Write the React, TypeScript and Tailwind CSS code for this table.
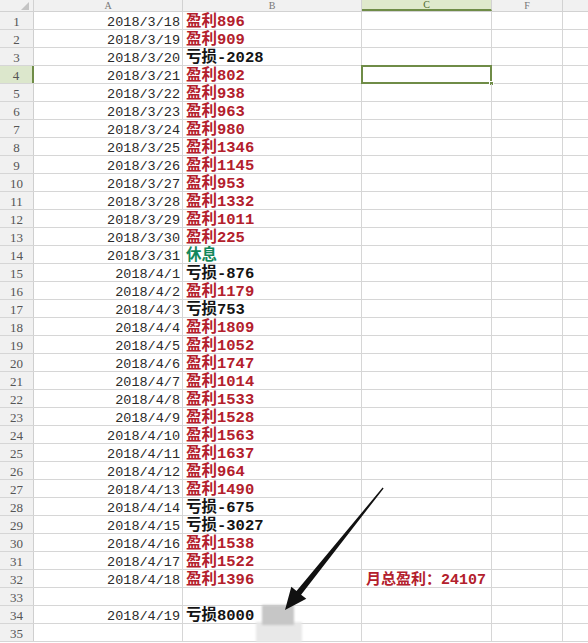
import React from 'react';

type Row = { date?: string; text?: string; tone?: 'red' | 'black' | 'green'; note?: string };

const rows: Row[] = [
  { date: '2018/3/18', text: '盈利896', tone: 'red' },
  { date: '2018/3/19', text: '盈利909', tone: 'red' },
  { date: '2018/3/20', text: '亏损-2028', tone: 'black' },
  { date: '2018/3/21', text: '盈利802', tone: 'red' },
  { date: '2018/3/22', text: '盈利938', tone: 'red' },
  { date: '2018/3/23', text: '盈利963', tone: 'red' },
  { date: '2018/3/24', text: '盈利980', tone: 'red' },
  { date: '2018/3/25', text: '盈利1346', tone: 'red' },
  { date: '2018/3/26', text: '盈利1145', tone: 'red' },
  { date: '2018/3/27', text: '盈利953', tone: 'red' },
  { date: '2018/3/28', text: '盈利1332', tone: 'red' },
  { date: '2018/3/29', text: '盈利1011', tone: 'red' },
  { date: '2018/3/30', text: '盈利225', tone: 'red' },
  { date: '2018/3/31', text: '休息', tone: 'green' },
  { date: '2018/4/1', text: '亏损-876', tone: 'black' },
  { date: '2018/4/2', text: '盈利1179', tone: 'red' },
  { date: '2018/4/3', text: '亏损753', tone: 'black' },
  { date: '2018/4/4', text: '盈利1809', tone: 'red' },
  { date: '2018/4/5', text: '盈利1052', tone: 'red' },
  { date: '2018/4/6', text: '盈利1747', tone: 'red' },
  { date: '2018/4/7', text: '盈利1014', tone: 'red' },
  { date: '2018/4/8', text: '盈利1533', tone: 'red' },
  { date: '2018/4/9', text: '盈利1528', tone: 'red' },
  { date: '2018/4/10', text: '盈利1563', tone: 'red' },
  { date: '2018/4/11', text: '盈利1637', tone: 'red' },
  { date: '2018/4/12', text: '盈利964', tone: 'red' },
  { date: '2018/4/13', text: '盈利1490', tone: 'red' },
  { date: '2018/4/14', text: '亏损-675', tone: 'black' },
  { date: '2018/4/15', text: '亏损-3027', tone: 'black' },
  { date: '2018/4/16', text: '盈利1538', tone: 'red' },
  { date: '2018/4/17', text: '盈利1522', tone: 'red' },
  { date: '2018/4/18', text: '盈利1396', tone: 'red', note: '月总盈利：24107' },
  {},
  { date: '2018/4/19', text: '亏损8000', tone: 'black' },
  {},
];

const toneClass = {
  red: 'text-[#b3202c]',
  black: 'text-[#141414]',
  green: 'text-[#13875a]',
};

const cellFont = { fontFamily: '"Liberation Mono", "Noto Sans CJK SC", monospace' };

const App = () => {
  return (
    <div className="relative w-[588px] h-[643px] overflow-hidden bg-white">
      {/* column header */}
      <div className="flex h-[12px] bg-[#f1f1f1] border-b border-[#d2d2d2] text-[10px] leading-[11px] text-[#777]" style={{ fontFamily: '"Liberation Serif", serif' }}>
        <div className="w-[34px] shrink-0 border-r border-[#d2d2d2] flex justify-end pr-[4px]">
          <div className="w-0 h-0 mt-[2px] border-l-[8px] border-l-transparent border-b-[8px] border-b-[#c4c4c4]" />
        </div>
        <div className="w-[149px] shrink-0 border-r border-[#d2d2d2] text-center">A</div>
        <div className="w-[179px] shrink-0 border-r border-[#d2d2d2] text-center">B</div>
        <div className="w-[130px] shrink-0 border-r border-[#d2d2d2] bg-[#dfe9cc] border-b-2 border-b-[#6f8c47] text-center text-[#4e6a2c] leading-[10px]">C</div>
        <div className="w-[71px] shrink-0 border-r border-[#d2d2d2] text-center">F</div>
        <div className="flex-1" />
      </div>

      {rows.map((row, i) => {
        const n = i + 1;
        const active = n === 4;
        return (
          <div key={n} className="flex h-[18px] border-b border-[#d6d6d6]">
            <div
              className={`w-[34px] shrink-0 flex items-center justify-center pt-[2px] text-[13px] text-[#555] ${
                active ? 'bg-[#dce7cc] border-r-2 border-r-[#6f8c47]' : 'bg-[#f1f1f1] border-r border-[#cfcfcf]'
              }`}
              style={{ fontFamily: '"Liberation Serif", serif' }}
            >
              {n}
            </div>
            <div className="w-[149px] shrink-0 border-r border-[#d6d6d6] flex items-center justify-end pt-[5px] pr-[2px] text-[13.5px] text-[#2a2a2a]" style={cellFont}>
              {row.date}
            </div>
            <div
              className={`w-[179px] shrink-0 border-r border-[#d6d6d6] flex items-center pt-[5px] pl-[3px] text-[15.5px] font-bold whitespace-nowrap ${
                row.tone ? toneClass[row.tone] : ''
              }`}
              style={cellFont}
            >
              {row.text}
            </div>
            <div className="w-[130px] shrink-0 border-r border-[#d6d6d6] flex items-center pt-[5px] pl-[4px] text-[15px] font-bold text-[#b3202c] whitespace-nowrap relative" style={cellFont}>
              {row.note}
              {active && (
                <div className="absolute left-[-1px] top-[-1px] w-[131px] h-[19px] border-2 border-[#6f8c47]">
                  <div className="absolute right-[-4px] bottom-[-4px] w-[5px] h-[5px] bg-[#6f8c47] border border-white" />
                </div>
              )}
            </div>
            <div className="w-[71px] shrink-0 border-r border-[#d6d6d6]" />
            <div className="flex-1" />
          </div>
        );
      })}

      {/* redaction blur */}
      <div className="absolute left-[256px] top-[622px] w-[46px] h-[20px] bg-[#e8e8e8] blur-[1px]" />
      <div className="absolute left-[262px] top-[605px] w-[32px] h-[20px] bg-[#c6c6c6] blur-[1px]" />

      {/* annotation arrow */}
      <svg className="absolute left-0 top-0 pointer-events-none" width="588" height="643" viewBox="0 0 588 643">
        <polygon
          points="382.6,487.6 296.5,590.9 291.3,586.8 285,610 306.3,598.8 301.1,594.7 383.6,488.4"
          fill="#111"
        />
      </svg>
    </div>
  );
};

export default App;
